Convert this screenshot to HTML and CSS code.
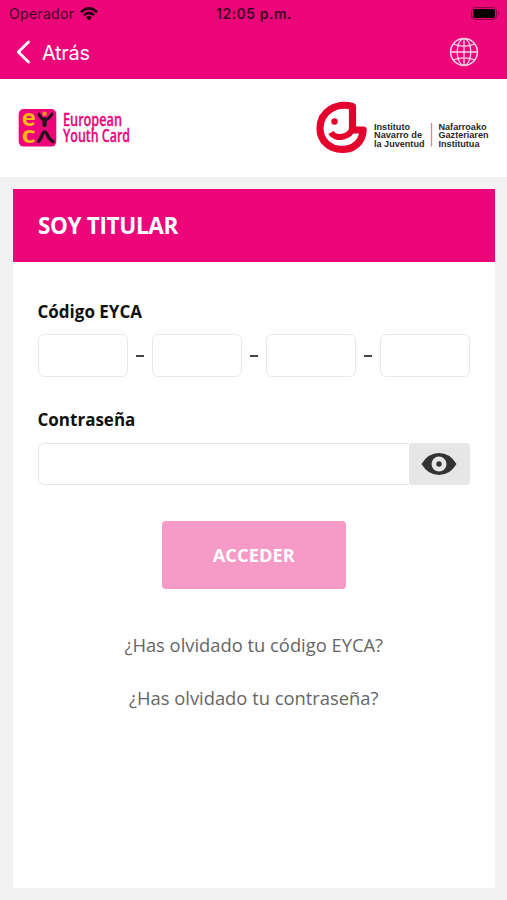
FILE: index.html
```html
<!DOCTYPE html>
<html lang="es">
<head>
<meta charset="utf-8">
<meta name="viewport" content="width=device-width, initial-scale=1">
<title>European Youth Card</title>
<link rel="stylesheet" href="styles.css">
</head>
<body>
<header class="top">
  <div class="status">
    <div class="carrier">
      <span class="carrier-name">Operador</span>
      <svg width="18" height="14" viewBox="0 0 18 14" fill="none" stroke="#25000f" stroke-width="2.6"><path d="M.9 5.2Q9-2.5 17.1 5.2M3.9 8.3Q9 3.2 14.1 8.3"/><path d="M6 10.4Q9 7.6 12 10.4L9 13.5z" fill="#25000f" stroke="none"/></svg>
    </div>
    <span class="clock">12:05 p.m.</span>
    <svg class="battery" width="30" height="13" viewBox="0 0 30 13"><rect x=".5" y=".5" width="25" height="12" rx="3.5" fill="none" stroke="#8d0047"/><rect x="2" y="2" width="22" height="9" rx="2" fill="#000"/><path d="M27 4.5q2 2 0 4z" fill="#8d0047"/></svg>
  </div>
  <nav class="nav">
    <a class="back"><svg width="15" height="24" viewBox="0 0 15 24" fill="none" stroke="#fff" stroke-width="2.8" stroke-linecap="round" stroke-linejoin="round"><path d="M12.500 2L2.300 12l10.200 10"/></svg><span>Atrás</span></a>
    <svg class="globe" width="30" height="30" viewBox="0 0 30 30" fill="none" stroke="#ffd3e8" stroke-width="1.3"><circle cx="15" cy="15" r="13.4" stroke-width="1.5"/><ellipse cx="15" cy="15" rx="6.8" ry="13.4"/><path d="M15 1.6v26.8M1.6 15h26.8M4.5 7.2Q15 11 25.500 7.2M4.500 22.800Q15 19 25.500 22.800"/></svg>
  </nav>
</header>
<div class="logos">
  <svg class="eyca" width="118" height="40" viewBox="0 0 118 40">
    <rect x=".7" y="1" width="37.600" height="37.600" rx="5" fill="#ec0679"/>
    <g class="mark"><text x="4" y="17.500" textLength="13.500" lengthAdjust="spacingAndGlyphs">e</text><text x="4" y="34.500" textLength="13.500" lengthAdjust="spacingAndGlyphs">c</text></g>
    <circle cx="26.600" cy="5.800" r="2.200" fill="#f99a24"/>
    <g fill="none" stroke="#25101c" stroke-linecap="round"><path d="M21 6Q22.500 10.500 26 12M34 6Q31.500 10.500 27.500 12" stroke-width="2.800"/><path d="M26.600 11.500v5.500" stroke-width="4.300"/><path d="M20.500 33.500Q23.500 30 24.500 26Q26.500 21.500 29 26Q30.500 31 35 33.500" stroke-width="3.200"/></g>
    <g class="word"><text x="45" y="18" textLength="59" lengthAdjust="spacingAndGlyphs">European</text><text x="45" y="34.300" textLength="67" lengthAdjust="spacingAndGlyphs">Youth Card</text></g>
  </svg>
  <svg class="inj" width="174" height="54" viewBox="0 0 174 54">
    <g fill="none" stroke="#e4032d" stroke-width="7.200"><path d="M36.500 5.500C21 1 4 10 4 27.500C4 40 14 48.500 26 48.500C38 48.500 46.500 41 47.200 29H36.500z" stroke-linejoin="round"/><path d="M15 31.500C19 39 34 37 36.500 27" stroke-width="6"/></g>
    <circle cx="18.500" cy="20.500" r="3.200" fill="#e4032d"/>
    <path d="M115.500 22v23.500" stroke="#f07a91" stroke-width="1.300"/>
    <g class="inst"><text x="58" y="28.500" textLength="36" lengthAdjust="spacingAndGlyphs">Instituto</text><text x="58" y="37" textLength="48" lengthAdjust="spacingAndGlyphs">Navarro de</text><text x="58" y="45.500" textLength="50.500" lengthAdjust="spacingAndGlyphs">la Juventud</text><text x="122.500" y="28.500" textLength="48" lengthAdjust="spacingAndGlyphs">Nafarroako</text><text x="122.500" y="37" textLength="50" lengthAdjust="spacingAndGlyphs">Gazteriaren</text><text x="122.500" y="45.500" textLength="41" lengthAdjust="spacingAndGlyphs">Institutua</text></g>
  </svg>
</div>
<main class="card">
  <h1>SOY TITULAR</h1>
  <form class="form">
    <label>Código EYCA</label>
    <div class="code"><input aria-label="1"><i></i><input aria-label="2"><i></i><input aria-label="3"><i></i><input aria-label="4"></div>
    <label class="pass-label">Contraseña</label>
    <div class="password">
      <input type="password" aria-label="Contraseña">
      <button class="eye" type="button" aria-label="Mostrar"><svg width="36" height="24" viewBox="0 0 36 24"><path d="M.5 12Q7 1 18 1t17.500 11Q29 23 18 23T.5 12z" fill="#333"/><circle cx="18" cy="12" r="7.500" fill="#e6e6e6"/><circle cx="18" cy="12" r="2.700" fill="#333"/></svg></button>
    </div>
    <button class="submit" type="button">ACCEDER</button>
    <a class="link first">¿Has olvidado tu código EYCA?</a>
    <a class="link second">¿Has olvidado tu contraseña?</a>
  </form>
</main>
</body>
</html>
```
FILE: styles.css
```css
* { box-sizing: border-box; }
body { margin: 0; height: 900px; background: #f2f2f2; font-family: "Open Sans", sans-serif; display: flex; flex-direction: column; }
svg { display: block; flex: none; overflow: visible; }
.top { height: 79px; background: #ec0679; font-family: Inter, sans-serif; }
.status { height: 27px; display: grid; grid-template-columns: 1fr auto 1fr; align-items: center; padding: 0 6px 0 9px; color: #40001f; }
.carrier { display: flex; align-items: center; gap: 6px; font-size: 14px; }
.carrier-name { letter-spacing: 0.3px; }
.clock { font-size: 14px; font-weight: 600; letter-spacing: 0.5px; margin-right: 2px; }
.battery { justify-self: end; }
.nav { height: 50px; display: flex; justify-content: space-between; align-items: center; padding: 0 28px 0 16px; }
.back { display: flex; align-items: center; gap: 11px; color: #fff; font-size: 20px; letter-spacing: -0.3px; line-height: 26px; }
.back span { padding-top: 1px; }
.logos { height: 98px; background: #fff; display: flex; justify-content: space-between; padding: 22px 17px 0 18px; }
.eyca { margin-top: 7px; }
.mark { font: 900 24px/1 Lato, sans-serif; fill: #fdb913; }
.word { font: 600 17.5px/1 "Open Sans", sans-serif; fill: #ec0679; stroke: #ec0679; stroke-width: 0.3px; }
.inst { font: 700 8.7px/1 "Liberation Sans", sans-serif; fill: #292929; }
.card { margin: 12px 12px 0 13px; height: 699px; background: #fff; }
h1 { margin: 0; height: 73px; padding-left: 25px; background: #ec0679; color: #fff; font-size: 22.5px; font-weight: 700; line-height: 73px; letter-spacing: -0.35px; }
.form { padding: 36px 25px 0 24.5px; display: flex; flex-direction: column; }
label { font-size: 17px; font-weight: 700; line-height: 27px; color: #111; }
.code { display: flex; align-items: center; justify-content: space-between; margin-top: 9px; }
.code i { width: 8px; height: 2px; background: #444; }
input { border: 1px solid #e9e9e9; border-radius: 6px; background: #fff; padding: 0 8px; font: 17px "Open Sans", sans-serif; min-width: 0; }
.code input { width: 90px; height: 43px; }
.pass-label { margin-top: 29px; }
.password { display: flex; height: 42px; margin-top: 10px; }
.password input { flex: 1; border-radius: 6px 0 0 6px; border-right: 0; }
.eye { width: 61px; border: 0; border-radius: 4px; background: #e6e6e6; display: grid; place-items: center; padding: 0 2px 1px 0; }
.submit { align-self: center; width: 184px; height: 68px; margin-top: 35.500px; border: 0; border-radius: 4px; background: #f69ac8; color: #fff; font: 700 18.3px "Open Sans", sans-serif; padding: 0 0 1px; }
.link { text-align: center; color: #666; font-size: 18.35px; line-height: 26px; }
.first { margin-top: 43.500px; }
.second { margin-top: 27px; }
```
